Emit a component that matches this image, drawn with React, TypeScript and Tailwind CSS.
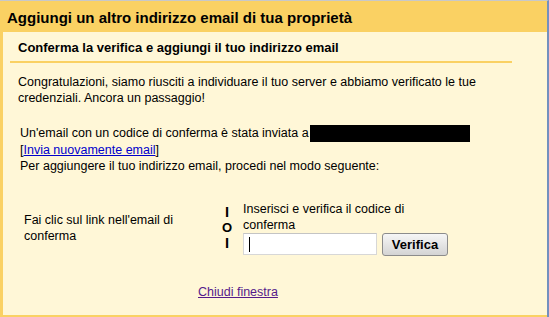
import React from "react";

export default function App() {
  const font = { fontFamily: '"Liberation Sans", Arial, sans-serif' };
  return (
    <div
      className="w-[549px] h-[317px] flex flex-col border-t border-[#c8c8c8] border-r-2 border-r-[#7390bf] bg-[#fad163] text-black"
      style={font}
    >
      <div className="h-[31px] pl-[7px] flex items-center text-[15px] font-bold leading-none pt-[1px]">
        Aggiungi un altro indirizzo email di tua proprietà
      </div>
      <div className="flex-1 ml-[3px] mb-[2px] bg-[#fff7d7] px-[7px] flex flex-col text-[12.5px] leading-[16px]">
        <div className="w-[502px] h-[31px] border-b-2 border-[#fad163] pl-[8px] pt-[8px] font-bold text-[13px]">
          Conferma la verifica e aggiungi il tuo indirizzo email
        </div>
        <p className="pl-[8px] pt-[11px] w-[490px]">
          Congratulazioni, siamo riusciti a individuare il tuo server e abbiamo verificato le tue credenziali. Ancora un passaggio!
        </p>
        <div className="pl-[10px] mt-[19px]">
          <div className="flex items-start">
            <span>Un'email con un codice di conferma è stata inviata a</span>
            <span className="ml-[1px] inline-block w-[160px] h-[17px] bg-black" />
          </div>
          <div>
            [<a className="text-[#0000cc] underline" href="#">Invia nuovamente email</a>]
          </div>
          <div>Per aggiungere il tuo indirizzo email, procedi nel modo seguente:</div>
        </div>
        <div className="flex items-center mt-[26px] h-[56px]">
          <div className="w-[190px] pl-[14px]">
            <div className="w-[165px]">Fai clic sul link nell'email di conferma</div>
          </div>
          <div className="w-[43px] flex flex-col items-center font-bold text-[13px] leading-[15.5px] pl-[11px]">
            <span className="text-[14.5px]">I</span>
            <span>O</span>
            <span className="text-[14.5px]">I</span>
          </div>
          <div className="w-[210px]">
            <div className="w-[200px]">Inserisci e verifica il codice di conferma</div>
            <div className="flex items-center">
              <div className="w-[134px] h-[22px] bg-white border border-[#d7d7d7] border-t-[#c4c4c4] flex items-center pl-[5px]">
                <span className="w-px h-[15px] bg-black" />
              </div>
              <button className="ml-[5px] w-[66px] h-[23px] rounded-[3px] border border-[#8c8c8c] bg-gradient-to-b from-[#f6f6f6] to-[#d4d4d4] font-bold text-[13px] leading-none">
                Verifica
              </button>
            </div>
          </div>
        </div>
        <div className="mt-[28px] pl-[188px]">
          <a className="text-[#551a8b] underline" href="#">Chiudi finestra</a>
        </div>
      </div>
    </div>
  );
}
